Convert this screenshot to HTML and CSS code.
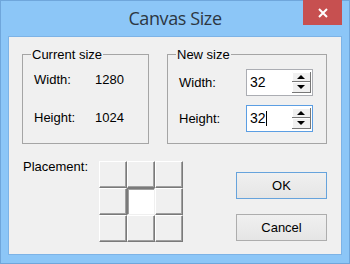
FILE: index.html
```html
<!DOCTYPE html>
<html lang="en">
<head>
  <meta charset="UTF-8">
  <meta name="viewport" content="width=device-width, initial-scale=1.0">
  <title>Canvas Size</title>
  <link rel="stylesheet" href="styles.css">
</head>
<body>
  <div class="window">
    <div class="titlebar">
      <span class="title">Canvas Size</span>
      <button class="close" aria-label="Close">
        <svg width="10" height="10" viewBox="0 0 10 10">
          <path d="M1 1L9 9M9 1L1 9" stroke="#fff" stroke-width="2"/>
        </svg>
      </button>
    </div>

    <div class="client">
      <div class="groups">
        <div class="group current">
          <span class="group-title">Current size</span>
          <span>Width:</span><span>1280</span>
          <span>Height:</span><span>1024</span>
        </div>

        <div class="group new">
          <span class="group-title">New size</span>
          <label>Width:</label>
          <div class="spin">
            <span class="spin-value">32</span>
            <svg class="spin-buttons" width="19" height="21" viewBox="0 0 19 21">
              <rect width="19" height="21" fill="#f0f0f0"/>
              <path d="M0.5 9V0.5H18" stroke="#fff" fill="none"/>
              <path d="M0 9.5H19M18.5 0V10" stroke="#777" fill="none"/>
              <path d="M0.5 20V10.5H18" stroke="#fff" fill="none"/>
              <path d="M0 20.5H19M18.5 10V21" stroke="#777" fill="none"/>
              <path d="M5 7H13L9 3Z" fill="#000"/>
              <path d="M5 13H13L9 17Z" fill="#000"/>
            </svg>
          </div>
          <label>Height:</label>
          <div class="spin focused">
            <span class="spin-value">32<span class="caret"></span></span>
            <svg class="spin-buttons" width="19" height="21" viewBox="0 0 19 21">
              <rect width="19" height="21" fill="#f0f0f0"/>
              <path d="M0.5 9V0.5H18" stroke="#fff" fill="none"/>
              <path d="M0 9.5H19M18.5 0V10" stroke="#777" fill="none"/>
              <path d="M0.5 20V10.5H18" stroke="#fff" fill="none"/>
              <path d="M0 20.5H19M18.5 10V21" stroke="#777" fill="none"/>
              <path d="M5 7H13L9 3Z" fill="#000"/>
              <path d="M5 13H13L9 17Z" fill="#000"/>
            </svg>
          </div>
        </div>
      </div>

      <div class="bottom">
        <span class="placement-label">Placement:</span>
        <div class="placement">
          <div class="cell"></div><div class="cell"></div><div class="cell"></div>
          <div class="cell"></div><div class="cell selected"></div><div class="cell"></div>
          <div class="cell"></div><div class="cell"></div><div class="cell"></div>
        </div>
        <div class="actions">
          <button class="btn default">OK</button>
          <button class="btn">Cancel</button>
        </div>
      </div>
    </div>
  </div>
</body>
</html>
```

FILE: styles.css
```css
body {
  margin: 0;
  font-family: 'Liberation Sans', Arial, sans-serif;
  font-size: 13px;
  color: #000;
}
.window {
  width: 350px;
  height: 264px;
  box-sizing: border-box;
  background-color: #8cc6f7;
  border: 1px solid #6fa6db;
}
.titlebar {
  height: 35px;
  display: grid;
  grid-template-columns: 1fr auto 1fr;
  align-items: start;
}
.title {
  grid-column: 2;
  margin-top: 5px;
  font-family: 'Open Sans', 'Noto Sans', sans-serif;
  font-size: 18px;
  line-height: 24px;
  letter-spacing: -0.4px;
  color: #2d3742;
}
.close {
  grid-column: 3;
  justify-self: end;
  margin: -1px 7px 0 0;
  width: 39px;
  height: 25px;
  padding: 0;
  border: none;
  background-color: #c75050;
  display: flex;
  align-items: center;
  justify-content: center;
}
/* zona cinza do diálogo: 332 x 217 por dentro da borda */
.client {
  margin-left: 7px;
  width: 305px;
  height: 200px;
  padding: 17px 14px 0 13px;
  background-color: #f0f0f0;
  border: 1px solid #7db3e6;
}
.groups {
  display: flex;
  gap: 18px;
}
.group {
  position: relative;
  height: 90px;
  box-sizing: border-box;
  border: 1px solid #a5a5a5;
  line-height: 15px;
  display: grid;
  align-content: start;
}
.group-title {
  position: absolute;
  top: -8px;
  left: 8px;
  padding: 0 1px;
  background-color: #f0f0f0;
}
.current {
  width: 127px;
  grid-template-columns: 61px auto;
  grid-auto-rows: 15px;
  row-gap: 23px;
  padding: 17px 0 0 11px;
}
.new {
  width: 160px;
  grid-template-columns: 67px 67px;
  grid-auto-rows: 27px;
  row-gap: 9px;
  align-items: center;
  padding: 14px 0 0 11px;
}
.spin {
  height: 27px;
  box-sizing: border-box;
  border: 1px solid #abadb3;
  background-color: #fff;
  display: flex;
  align-items: center;
  padding-right: 1px;
}
.spin.focused {
  border-color: #5b9ee3;
}
.spin-value {
  flex: 1;
  padding-left: 3px;
  font-size: 14px;
  display: flex;
  align-items: center;
}
.caret {
  display: inline-block;
  width: 1px;
  height: 15px;
  background-color: #000;
}
.spin-buttons {
  display: block;
  margin-bottom: 1px;
}
.bottom {
  display: flex;
  align-items: flex-start;
  margin-top: 15px;
  line-height: 15px;
}
.placement-label {
  width: 76px;
  margin-left: 1px;
}
.placement {
  margin-top: 2px;
  display: grid;
  grid-template-columns: repeat(3, 28px);
  grid-auto-rows: 27px;
}
.cell {
  box-sizing: border-box;
  background-color: #f0f0f0;
  border: 1px solid;
  border-color: #fff #7a7a7a #7a7a7a #fff;
  box-shadow: inset -1px -1px 0 #a0a0a0;
}
.cell.selected {
  background-color: #fff;
  border-color: #7a7a7a #f0f0f0 #f0f0f0 #7a7a7a;
  box-shadow: inset 1px 1px 0 #a0a0a0;
}
.actions {
  margin-left: auto;
  margin-top: 13px;
  display: flex;
  flex-direction: column;
  gap: 15px;
}
.btn {
  width: 91px;
  height: 27px;
  padding: 0;
  border: 1px solid #adadad;
  background: linear-gradient(#f0f0f0, #e5e5e5);
  font-family: 'Liberation Sans', Arial, sans-serif;
  font-size: 13px;
  color: #000;
}
.btn.default {
  border-color: #66a3dc;
}
```
